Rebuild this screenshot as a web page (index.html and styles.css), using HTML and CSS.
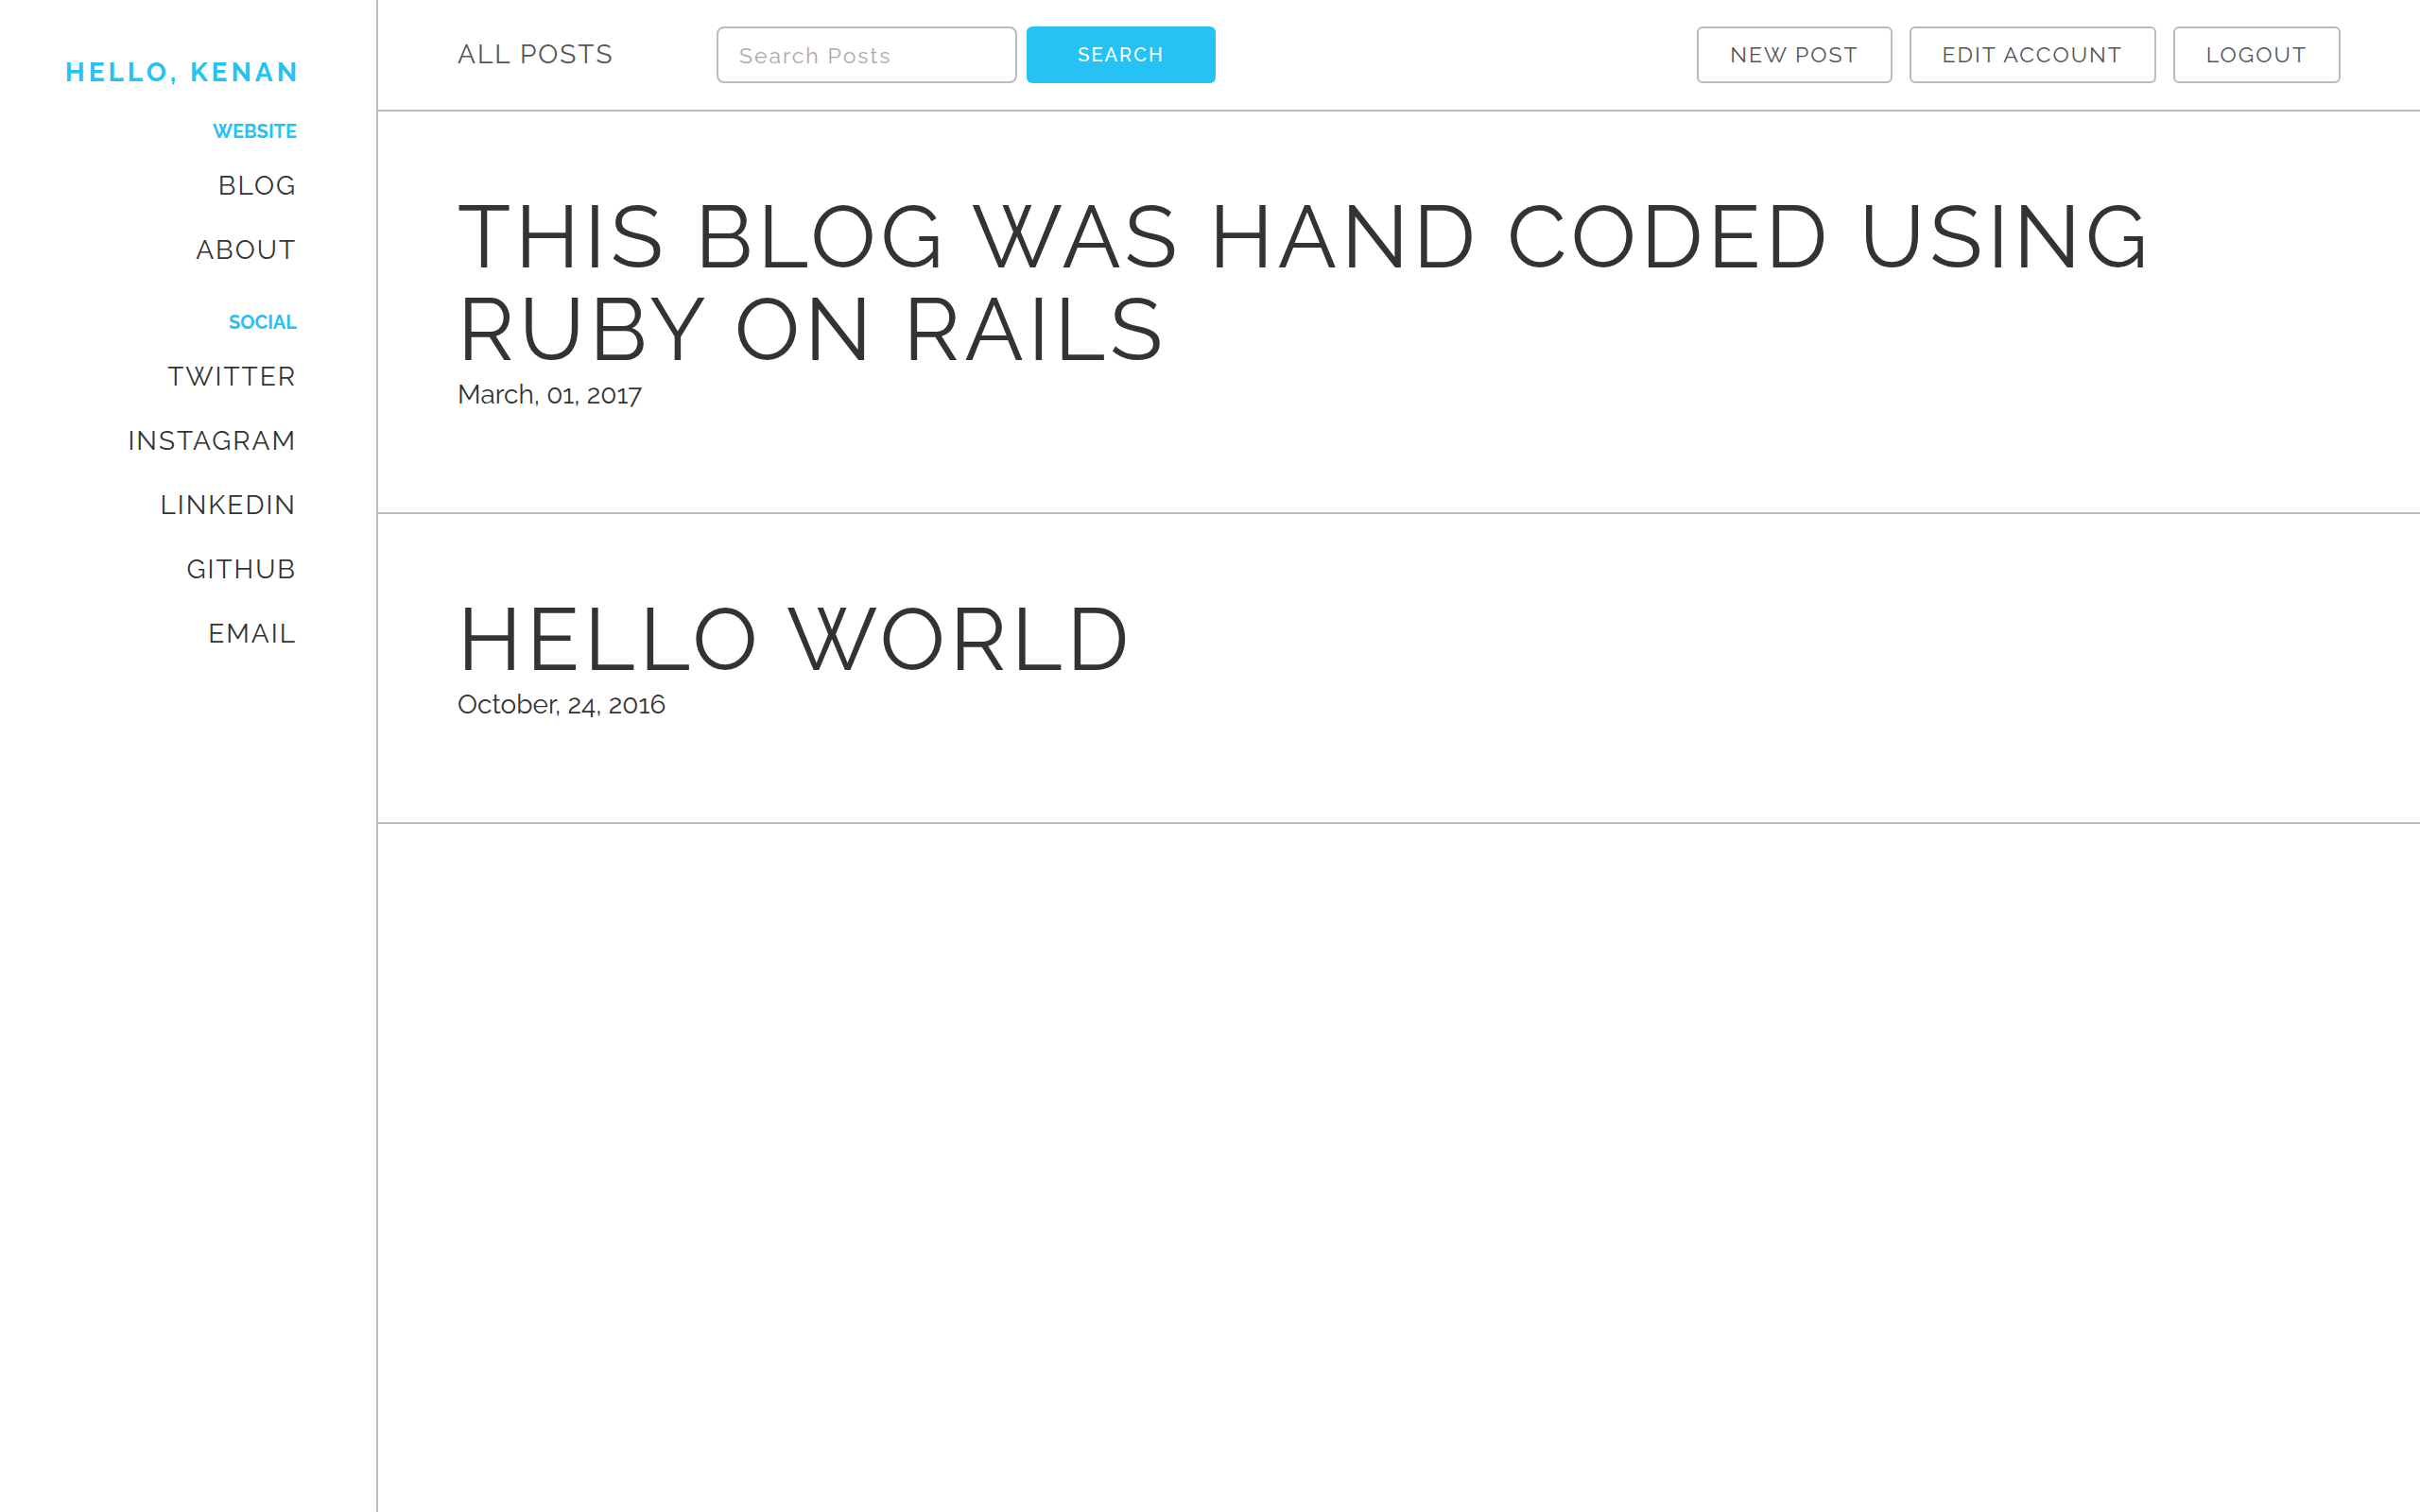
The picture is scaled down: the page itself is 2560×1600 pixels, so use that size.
FILE: index.html
```html
<!DOCTYPE html>
<html lang="en">
<head>
  <meta charset="utf-8">
  <title>All Posts</title>
  <link rel="stylesheet" href="styles.css">
</head>
<body>
  <div class="layout">
    <aside class="sidebar">
      <p class="greeting">Hello, Kenan</p>
      <nav class="menu" aria-labelledby="menu-website">
        <h2 class="menu-title" id="menu-website">Website</h2>
        <a class="menu-link" href="#">Blog</a>
        <a class="menu-link" href="#">About</a>
      </nav>
      <nav class="menu" aria-labelledby="menu-social">
        <h2 class="menu-title" id="menu-social">Social</h2>
        <a class="menu-link" href="#">Twitter</a>
        <a class="menu-link" href="#">Instagram</a>
        <a class="menu-link" href="#">LinkedIn</a>
        <a class="menu-link" href="#">GitHub</a>
        <a class="menu-link" href="#">Email</a>
      </nav>
    </aside>
    <div class="content">
      <header class="topbar">
        <p class="page-title">All Posts</p>
        <form class="search">
          <input class="search-input" type="text" placeholder="Search Posts" aria-label="Search Posts">
          <button class="search-button" type="submit">Search</button>
        </form>
        <nav class="actions">
          <a class="action" href="#">New Post</a>
          <a class="action" href="#">Edit Account</a>
          <a class="action" href="#">Logout</a>
        </nav>
      </header>
      <main>
        <article class="post">
          <h1 class="post-title"><a href="#">This blog was hand coded using Ruby on Rails</a></h1>
          <p class="post-date">March, 01, 2017</p>
        </article>
        <article class="post">
          <h1 class="post-title"><a href="#">Hello World</a></h1>
          <p class="post-date">October, 24, 2016</p>
        </article>
      </main>
    </div>
  </div>
</body>
</html>
```
FILE: styles.css
```css
* {
  box-sizing: border-box;
}

body {
  margin: 0;
  background: #fff;
  color: #333;
  font-family: Raleway, Lato, sans-serif;
  font-size: 28px;
  line-height: 40px;
  font-variant-numeric: oldstyle-nums;
}

h1,
h2,
p {
  margin: 0;
}

a {
  color: inherit;
  text-decoration: none;
}

.layout {
  display: flex;
  min-height: 100vh;
}

.sidebar {
  flex: 0 0 400px;
  padding: 57px 80px 57px 0;
  border-right: 2px solid #bbb;
  text-align: right;
  text-transform: uppercase;
}

.greeting {
  margin-bottom: 20px;
  color: #26c2f3;
  font-weight: 700;
  letter-spacing: 4px;
}

.menu {
  display: flex;
  flex-direction: column;
  margin-bottom: 20px;
  padding-right: 4px;
}

.menu-title {
  padding-bottom: 2px;
  color: #26c2f3;
  font-size: 20px;
  font-weight: 700;
  line-height: 44px;
}

.menu-link {
  line-height: 68px;
  letter-spacing: 2px;
}

.content {
  flex: 1;
  min-width: 0;
}

.topbar {
  display: flex;
  align-items: center;
  padding: 28px 84px;
  border-bottom: 2px solid #bbb;
  color: #555;
}

.page-title {
  flex: 0 0 274px;
  text-transform: uppercase;
  letter-spacing: 2px;
}

.search {
  display: flex;
  gap: 10px;
}

.search-input {
  width: 318px;
  height: 60px;
  padding: 0 22px;
  border: 2px solid #bbb;
  border-radius: 8px;
  color: #555;
  font: inherit;
  font-size: 23px;
  letter-spacing: 2px;
}

.search-input::placeholder {
  color: #aaa;
  opacity: 1;
}

.search-button {
  width: 200px;
  height: 60px;
  padding: 0;
  border: 0;
  border-radius: 6px;
  background: #26c2f3;
  color: #fff;
  font: inherit;
  font-size: 20px;
  font-weight: 500;
  text-transform: uppercase;
  letter-spacing: 2px;
}

.actions {
  display: flex;
  gap: 18px;
  margin-left: auto;
}

.action {
  padding: 0 33px;
  border: 2px solid #bbb;
  border-radius: 6px;
  font-size: 23px;
  line-height: 56px;
  text-transform: uppercase;
  letter-spacing: 2px;
}

.post {
  padding: 84px 84px 104px;
  border-bottom: 2px solid #bbb;
}

.post-title {
  font-size: 92px;
  font-weight: 400;
  line-height: 98px;
  text-transform: uppercase;
  letter-spacing: 5px;
}
```
